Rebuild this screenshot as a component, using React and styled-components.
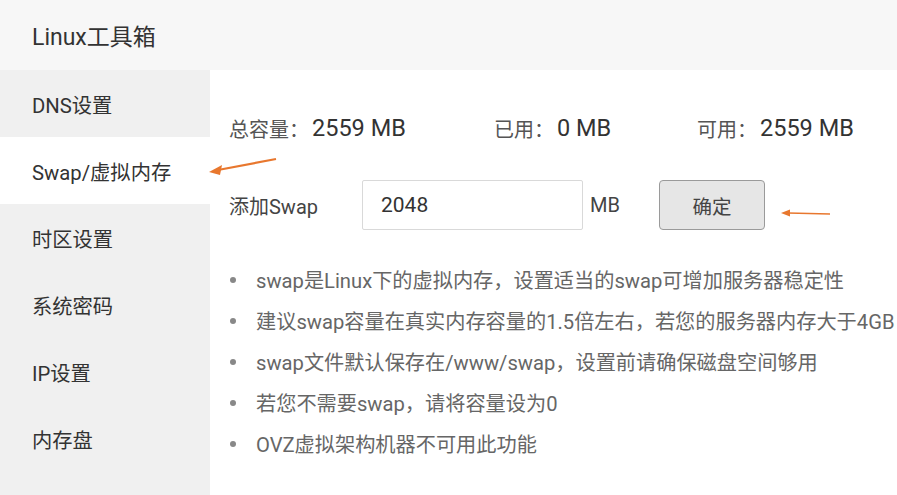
import React from 'react'
import styled, { createGlobalStyle } from 'styled-components'

const GlobalStyle = createGlobalStyle`
  html, body {
    margin: 0;
    padding: 0;
    background: #ffffff;
  }
  body {
    font-family: Roboto, "Noto Sans CJK SC", sans-serif;
  }
`

const Page = styled.div`
  position: relative;
  width: 897px;
  height: 495px;
  overflow: hidden;
  background: #ffffff;
  color: #333;
`

const Header = styled.header`
  height: 70px;
  display: flex;
  align-items: center;
  padding-left: 32px;
  background: #f7f7f7;
  font-size: 23px;
  color: #333;
`

const Body = styled.div`
  display: grid;
  grid-template-columns: 210px 1fr;
  height: 425px;
`

const Sidebar = styled.nav`
  background: #f0f0f0;
  display: flex;
  flex-direction: column;
`

const NavItem = styled.div`
  height: 67px;
  display: flex;
  align-items: center;
  padding-left: 32px;
  font-size: 20.3px;
  color: #333;
  background: ${p => (p.$active ? '#ffffff' : 'transparent')};
`

const Main = styled.main`
  padding: 40px 0 0 19px;
  display: flex;
  flex-direction: column;
  white-space: nowrap;
  min-width: 0;
`

const Stats = styled.div`
  display: grid;
  grid-template-columns: 265px 203px auto;
  height: 36px;
  align-items: center;
`

const Stat = styled.div`
  display: flex;
  align-items: center;
  gap: 3px;
`

const StatLabel = styled.span`
  font-size: 20px;
  color: #555;
`

const StatValue = styled.span`
  font-size: 23.5px;
  color: #333;
`

const AddRow = styled.div`
  margin-top: 34px;
  height: 50px;
  display: flex;
  align-items: center;
`

const AddLabel = styled.span`
  width: 133px;
  font-size: 20px;
  color: #444;
`

const SizeInput = styled.input`
  box-sizing: border-box;
  width: 221px;
  height: 50px;
  border: 1px solid #d9d9d9;
  border-radius: 2px;
  padding: 0 18px;
  font-family: inherit;
  font-size: 21px;
  color: #333;
  outline: none;
`

const Unit = styled.span`
  margin-left: 7px;
  width: 69px;
  font-size: 20px;
  color: #444;
`

const ConfirmButton = styled.button`
  box-sizing: border-box;
  width: 106px;
  height: 50px;
  background: #e6e6e6;
  border: 1.5px solid #9a9a9a;
  border-radius: 4px;
  font-family: inherit;
  font-size: 19.5px;
  color: #444;
`

const Tips = styled.ul`
  list-style: none;
  margin: 29px 0 0;
  padding: 0;
`

const Tip = styled.li`
  height: 41px;
  display: flex;
  align-items: center;
  font-size: 20.2px;
  color: #666;

  &::before {
    content: '';
    width: 6px;
    height: 6px;
    border-radius: 50%;
    background: #888;
    margin: 0 20px 0 1px;
    flex: none;
  }
`

const Annotation = styled.svg`
  position: absolute;
  left: 0;
  top: 0;
  pointer-events: none;
`

const menu = ['DNS设置', 'Swap/虚拟内存', '时区设置', '系统密码', 'IP设置', '内存盘']

const tips = [
  'swap是Linux下的虚拟内存，设置适当的swap可增加服务器稳定性',
  '建议swap容量在真实内存容量的1.5倍左右，若您的服务器内存大于4GB',
  'swap文件默认保存在/www/swap，设置前请确保磁盘空间够用',
  '若您不需要swap，请将容量设为0',
  'OVZ虚拟架构机器不可用此功能',
]

export default function App() {
  return (
    <Page>
      <GlobalStyle />
      <Header>Linux工具箱</Header>
      <Body>
        <Sidebar>
          {menu.map((name, i) => (
            <NavItem key={name} $active={i === 1}>{name}</NavItem>
          ))}
        </Sidebar>
        <Main>
          <Stats>
            <Stat><StatLabel>总容量：</StatLabel><StatValue>2559 MB</StatValue></Stat>
            <Stat><StatLabel>已用：</StatLabel><StatValue>0 MB</StatValue></Stat>
            <Stat><StatLabel>可用：</StatLabel><StatValue>2559 MB</StatValue></Stat>
          </Stats>
          <AddRow>
            <AddLabel>添加Swap</AddLabel>
            <SizeInput defaultValue="2048" />
            <Unit>MB</Unit>
            <ConfirmButton>确定</ConfirmButton>
          </AddRow>
          <Tips>
            {tips.map(t => <Tip key={t}>{t}</Tip>)}
          </Tips>
        </Main>
      </Body>
      <Annotation width="897" height="495">
        <path d="M276 159 L218 170" stroke="#e8772e" strokeWidth="2.2" fill="none" />
        <path d="M209 172 L222 165 L220 175 Z" fill="#e8772e" />
        <path d="M830 214 L788 213" stroke="#e8772e" strokeWidth="1.4" fill="none" />
        <path d="M781 213 L790 209.5 L790 216.5 Z" fill="#e8772e" />
      </Annotation>
    </Page>
  )
}
